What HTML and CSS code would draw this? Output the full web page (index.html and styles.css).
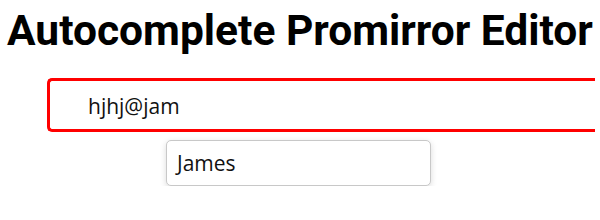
FILE: index.html
```html
<!DOCTYPE html>
<html lang="en">
<head>
  <meta charset="UTF-8">
  <title>Autocomplete Promirror Editor</title>
  <link rel="stylesheet" href="styles.css">
</head>
<body>
  <h1>Autocomplete Promirror Editor</h1>

  <!-- Editor -->
  <div class="editor">
    <p>hjhj@jam</p>
  </div>

  <!-- Sugerencias -->
  <ul class="suggestions">
    <li>James</li>
  </ul>
</body>
</html>
```

FILE: styles.css
```css
html {
  overflow: hidden;
}
body {
  margin: 0;
  padding: 0 7px;
  font-family: 'Open Sans', sans-serif;
  overflow: hidden;
}
h1 {
  font-family: Roboto, sans-serif;
  font-size: 42.5px;
  font-weight: bold;
  margin: 6px 0 23px;
  color: #000;
  white-space: nowrap;
}
/* Caja del editor */
.editor {
  margin-left: 40px;
  width: calc(100% - 79px);
  height: 48px;
  border: 3px solid #ff0000;
  border-right: none;
  border-radius: 5px 0 0 5px;
  padding-left: 38px;
  display: flex;
  align-items: center;
}
.editor p {
  margin: 2px 0 0;
  font-size: 21px;
  color: #111;
}
/* Lista de sugerencias */
.suggestions {
  list-style: none;
  margin: 8px 0 0 159px;
  padding: 0;
  width: 263px;
  background: #fff;
  border: 1px solid #c8c8c8;
  border-radius: 5px;
  box-shadow: 0 2px 6px rgba(0,0,0,0.15);
}
.suggestions li {
  height: 44px;
  line-height: 44px;
  padding-left: 10px;
  font-size: 21px;
  color: #111;
}
```
